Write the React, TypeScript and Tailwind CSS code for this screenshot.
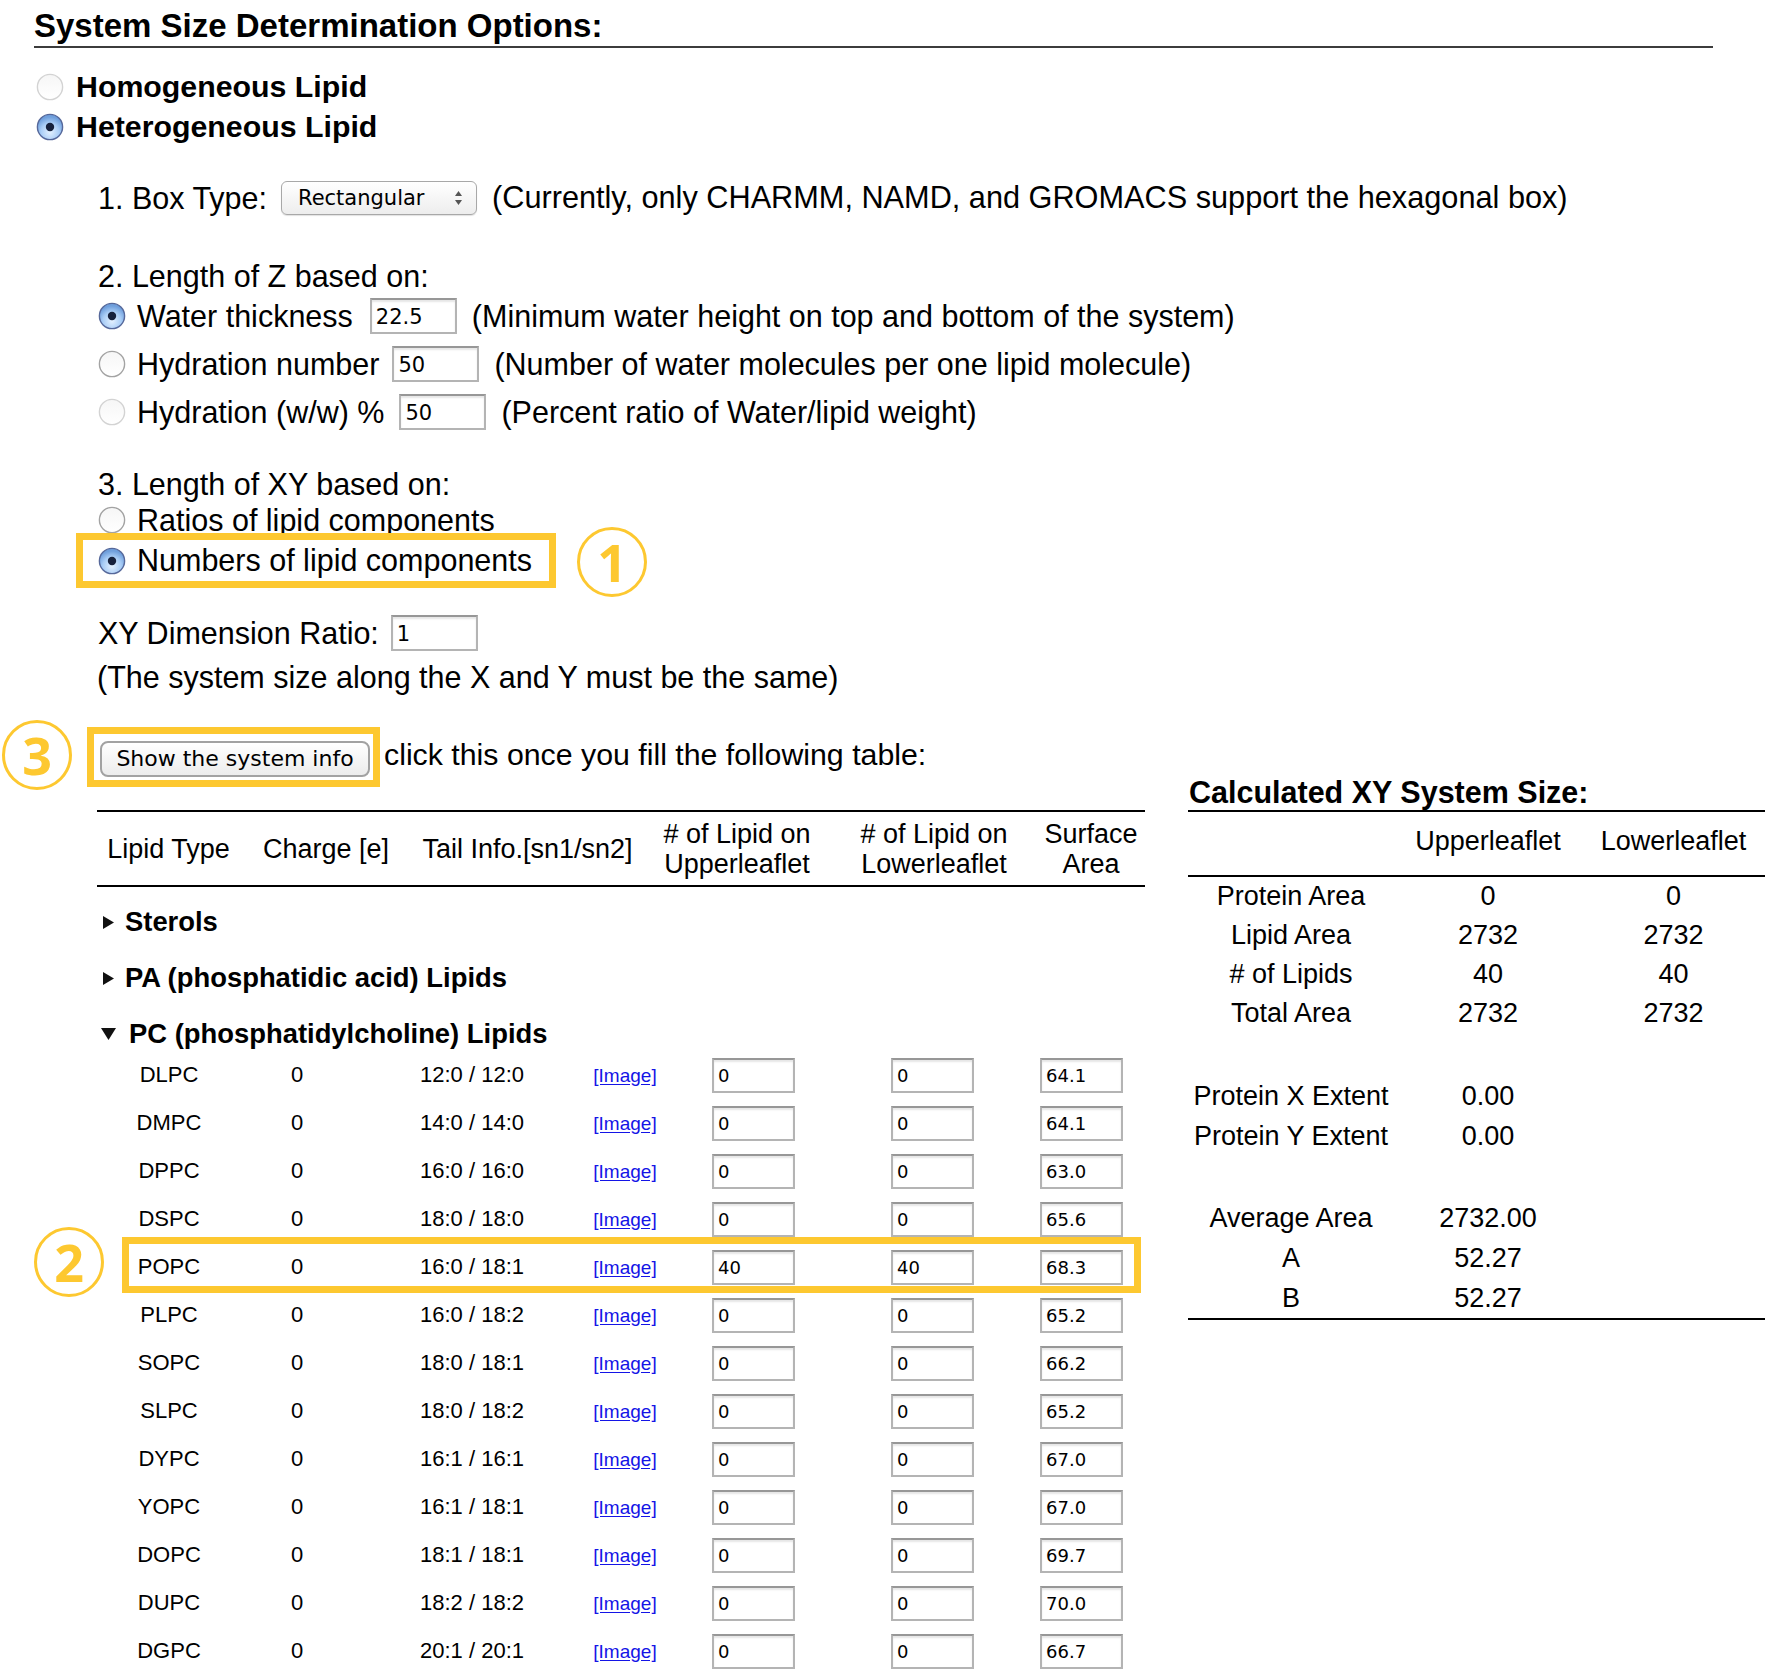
import React from "react";

function Radio({ checked, light }: { checked?: boolean; light?: boolean }) {
  if (checked) {
    return (
      <svg width="28" height="28" viewBox="0 0 28 28" className="shrink-0">
        <defs>
          <radialGradient id="rOn" cx="50%" cy="70%" r="60%">
            <stop offset="0%" stopColor="#e4f1ff" />
            <stop offset="60%" stopColor="#a9cdf6" />
            <stop offset="100%" stopColor="#6f9fdc" />
          </radialGradient>
        </defs>
        <circle cx="14" cy="14" r="12.6" fill="url(#rOn)" stroke="#56689a" strokeWidth="1.4" />
        <circle cx="14" cy="14" r="4.2" fill="#17223d" />
      </svg>
    );
  }
  return (
    <svg width="28" height="28" viewBox="0 0 28 28" className="shrink-0">
      <defs>
        <linearGradient id="rOff" x1="0" y1="0" x2="0" y2="1">
          <stop offset="0%" stopColor="#f6f6f6" />
          <stop offset="100%" stopColor="#ffffff" />
        </linearGradient>
      </defs>
      <circle
        cx="14"
        cy="14"
        r="12.6"
        fill="url(#rOff)"
        stroke={light ? "#d3d3d3" : "#a3a3a3"}
        strokeWidth="1.4"
      />
    </svg>
  );
}

function Badge({ n }: { n: string }) {
  return (
    <div className="w-[70px] h-[70px] rounded-full border-[3px] border-[#fdc830] flex items-center justify-center shrink-0">
      <span className="font-['Open_Sans',sans-serif] font-bold text-[52px] leading-none text-[#fdc830]">{n}</span>
    </div>
  );
}

function Field({ value }: { value: string }) {
  return (
    <div className="w-[87px] h-[36px] shrink-0 border-2 border-[#b4b4b4] border-t-[#979797] bg-white shadow-[inset_0_2px_2px_rgba(0,0,0,0.10)] flex items-center pl-[4px] pt-[2px] font-['DejaVu_Sans',sans-serif] text-[21px] leading-none">
      {value}
    </div>
  );
}

function Cell({ value }: { value: string }) {
  return (
    <div className="w-[83px] h-[35px] shrink-0 border-2 border-[#b4b4b4] border-t-[#979797] bg-white shadow-[inset_0_2px_2px_rgba(0,0,0,0.10)] flex items-center pl-[4px] pt-[1px] font-['DejaVu_Sans',sans-serif] text-[18px] leading-none">
      {value}
    </div>
  );
}

function RightTri() {
  return (
    <svg width="11" height="13" viewBox="0 0 11 13" className="shrink-0">
      <polygon points="0,0 11,6.5 0,13" fill="#111" />
    </svg>
  );
}

function DownTri() {
  return (
    <svg width="15" height="12" viewBox="0 0 15 12" className="shrink-0">
      <polygon points="0,0 15,0 7.5,12" fill="#111" />
    </svg>
  );
}

const lipids: [string, string, string, string, string][] = [
  ["DLPC", "12:0 / 12:0", "0", "0", "64.1"],
  ["DMPC", "14:0 / 14:0", "0", "0", "64.1"],
  ["DPPC", "16:0 / 16:0", "0", "0", "63.0"],
  ["DSPC", "18:0 / 18:0", "0", "0", "65.6"],
  ["POPC", "16:0 / 18:1", "40", "40", "68.3"],
  ["PLPC", "16:0 / 18:2", "0", "0", "65.2"],
  ["SOPC", "18:0 / 18:1", "0", "0", "66.2"],
  ["SLPC", "18:0 / 18:2", "0", "0", "65.2"],
  ["DYPC", "16:1 / 16:1", "0", "0", "67.0"],
  ["YOPC", "16:1 / 18:1", "0", "0", "67.0"],
  ["DOPC", "18:1 / 18:1", "0", "0", "69.7"],
  ["DUPC", "18:2 / 18:2", "0", "0", "70.0"],
  ["DGPC", "20:1 / 20:1", "0", "0", "66.7"],
];

const summary: [string, string, string][] = [
  ["Protein Area", "0", "0"],
  ["Lipid Area", "2732", "2732"],
  ["# of Lipids", "40", "40"],
  ["Total Area", "2732", "2732"],
];

function SumRow({ a, b, c, tall }: { a: string; b: string; c: string; tall?: boolean }) {
  return (
    <div className={tall ? "h-[40px] flex items-center" : "h-[39px] flex items-center"}>
      <div className="w-[206px] text-center">{a}</div>
      <div className="w-[188px] text-center">{b}</div>
      <div className="w-[183px] text-center">{c}</div>
    </div>
  );
}

export default function App() {
  return (
    <div className="w-[1765px] h-[1677px] bg-white text-black font-['Liberation_Sans',Arial,sans-serif] overflow-hidden">
      {/* Title */}
      <div className="pt-[5px] pl-[34px] w-[1713px]">
        <div className="h-[43px] flex items-center border-b-2 border-[#3c3c3c] text-[33px] font-bold leading-none">
          System Size Determination Options:
        </div>
      </div>

      {/* Lipid type */}
      <div className="mt-[19px] pl-[36px] text-[30.3px] font-bold leading-none">
        <div className="h-[40px] flex items-center gap-[12px]">
          <Radio light />
          <span>Homogeneous Lipid</span>
        </div>
        <div className="h-[40px] flex items-center gap-[12px]">
          <Radio checked />
          <span>Heterogeneous Lipid</span>
        </div>
      </div>

      <div className="pl-[98px] text-[30.5px] leading-none">
        {/* 1. Box type */}
        <div className="mt-[31px] h-[40px] flex items-center">
          <span>1. Box Type:</span>
          <div className="ml-[14px] w-[196px] h-[34px] rounded-[6px] border border-[#a8a8a8] bg-[linear-gradient(#ffffff,#ededed)] shadow-[0_1px_1px_rgba(0,0,0,0.12)] flex items-center justify-between pl-[16px] pr-[13px]">
            <span className="font-['DejaVu_Sans',sans-serif] text-[21px] leading-none">Rectangular</span>
            <svg width="9" height="16" viewBox="0 0 9 16">
              <polygon points="4.5,1 8,6 1,6" fill="#555" />
              <polygon points="1,10 8,10 4.5,15" fill="#555" />
            </svg>
          </div>
          <span className="ml-[15px] text-[30.7px]">(Currently, only CHARMM, NAMD, and GROMACS support the hexagonal box)</span>
        </div>

        {/* 2. Length of Z */}
        <div className="mt-[42px] h-[32px] flex items-center">2. Length of Z based on:</div>
        <div className="h-[48px] flex items-center">
          <Radio checked />
          <span className="ml-[11px]">Water thickness</span>
          <div className="ml-[17px]"><Field value="22.5" /></div>
          <span className="ml-[15px]">(Minimum water height on top and bottom of the system)</span>
        </div>
        <div className="h-[48px] flex items-center">
          <Radio />
          <span className="ml-[11px]">Hydration number</span>
          <div className="ml-[13px]"><Field value="50" /></div>
          <span className="ml-[15px]">(Number of water molecules per one lipid molecule)</span>
        </div>
        <div className="h-[48px] flex items-center">
          <Radio light />
          <span className="ml-[11px]">Hydration (w/w) %</span>
          <div className="ml-[15px]"><Field value="50" /></div>
          <span className="ml-[15px]">(Percent ratio of Water/lipid weight)</span>
        </div>

        {/* 3. Length of XY */}
        <div className="mt-[30px] h-[36px] flex items-center">3. Length of XY based on:</div>
        <div className="h-[36px] flex items-center">
          <Radio />
          <span className="ml-[11px]">Ratios of lipid components</span>
        </div>
        <div className="relative -mt-[5px] -ml-[22px] w-[480px]">
          <div className="relative h-[55px] w-[480px] border-[7px] border-[#fdc830] bg-white flex items-center pl-[15px]">
            <Radio checked />
            <span className="ml-[11px]">Numbers of lipid components</span>
          </div>
          <div className="absolute left-[501px] top-[-6px]">
            <Badge n="1" />
          </div>
        </div>

        <div className="mt-[25px] h-[40px] flex items-center">
          <span>XY Dimension Ratio:</span>
          <div className="ml-[12px]"><Field value="1" /></div>
        </div>
        <div className="mt-[4px] h-[40px] flex items-center -ml-[1px]">(The system size along the X and Y must be the same)</div>
      </div>

      {/* Bottom section */}
      <div className="mt-[23px] flex items-start">
        {/* Left column */}
        <div className="w-[1145px] shrink-0">
          <div className="h-[70px] flex items-center pl-[2px]">
            <Badge n="3" />
            <div className="ml-[15px] w-[293px] h-[60px] border-[7px] border-[#fdc830] pl-[6px] pr-[3px] pt-[7px] pb-[3px] mt-[4px]">
              <button className="w-full h-full rounded-[8px] border-2 border-[#a2a2a2] bg-[linear-gradient(#ffffff,#ececec)] flex items-center justify-center font-['DejaVu_Sans',sans-serif] text-[22px] leading-none text-black">
                Show the system info
              </button>
            </div>
            <span className="ml-[4px] text-[30.3px] leading-none">click this once you fill the following table:</span>
          </div>

          {/* Table */}
          <div className="ml-[97px] w-[1048px] mt-[20px]">
            <div className="h-[77px] border-t-2 border-b-2 border-black flex items-center text-[27px] leading-[30px] text-center">
              <div className="w-[143px]">Lipid Type</div>
              <div className="w-[172px]">Charge [e]</div>
              <div className="w-[231px]">Tail Info.[sn1/sn2]</div>
              <div className="w-[188px]">
                # of Lipid on
                <br />
                Upperleaflet
              </div>
              <div className="w-[206px]">
                # of Lipid on
                <br />
                Lowerleaflet
              </div>
              <div className="w-[108px]">
                Surface
                <br />
                Area
              </div>
            </div>

            <div className="mt-[7px] text-[27.4px] font-bold leading-none">
              <div className="h-[56px] flex items-center pl-[6px] gap-[11px]">
                <RightTri />
                <span>Sterols</span>
              </div>
              <div className="h-[56px] flex items-center pl-[6px] gap-[11px]">
                <RightTri />
                <span>PA (phosphatidic acid) Lipids</span>
              </div>
              <div className="h-[45px] pt-[11px] flex items-center pl-[4px] gap-[13px]">
                <DownTri />
                <span>PC (phosphatidylcholine) Lipids</span>
              </div>
            </div>

            <div className="text-[22px] leading-none">
              {lipids.map(([name, tail, up, low, area]) => (
                <div key={name} className="relative h-[48px] flex items-center">
                  <div className="w-[144px] text-center">{name}</div>
                  <div className="w-[112px] text-center">0</div>
                  <div className="w-[238px] text-center">{tail}</div>
                  <div className="w-[68px] text-center text-[19px] text-[#1414e6] underline underline-offset-2">[Image]</div>
                  <div className="ml-[53px]"><Cell value={up} /></div>
                  <div className="ml-[96px]"><Cell value={low} /></div>
                  <div className="ml-[66px]"><Cell value={area} /></div>
                  {name === "POPC" && (
                    <>
                      <div className="absolute left-[25px] top-[-6px] w-[1019px] h-[56px] border-[7px] border-[#fdc830] pointer-events-none" />
                      <div className="absolute left-[-63px] top-[-16px]">
                        <Badge n="2" />
                      </div>
                    </>
                  )}
                </div>
              ))}
            </div>
          </div>
        </div>

        {/* Right column */}
        <div className="ml-[43px] w-[577px] pt-[54px] text-[27px] leading-none">
          <div className="h-[38px] border-b-2 border-black flex items-center text-[30.5px] font-bold pl-[1px]">
            Calculated XY System Size:
          </div>
          <div className="h-[65px] pb-[4px] border-b-2 border-black flex items-center">
            <div className="w-[206px]" />
            <div className="w-[188px] text-center">Upperleaflet</div>
            <div className="w-[183px] text-center">Lowerleaflet</div>
          </div>
          {summary.map(([a, b, c]) => (
            <SumRow key={a} a={a} b={b} c={c} />
          ))}
          <div className="mt-[43px]">
            <SumRow a="Protein X Extent" b="0.00" c="" tall />
            <SumRow a="Protein Y Extent" b="0.00" c="" tall />
          </div>
          <div className="mt-[42px] border-b-2 border-black">
            <SumRow a="Average Area" b="2732.00" c="" tall />
            <SumRow a="A" b="52.27" c="" tall />
            <SumRow a="B" b="52.27" c="" tall />
          </div>
        </div>
      </div>
    </div>
  );
}
